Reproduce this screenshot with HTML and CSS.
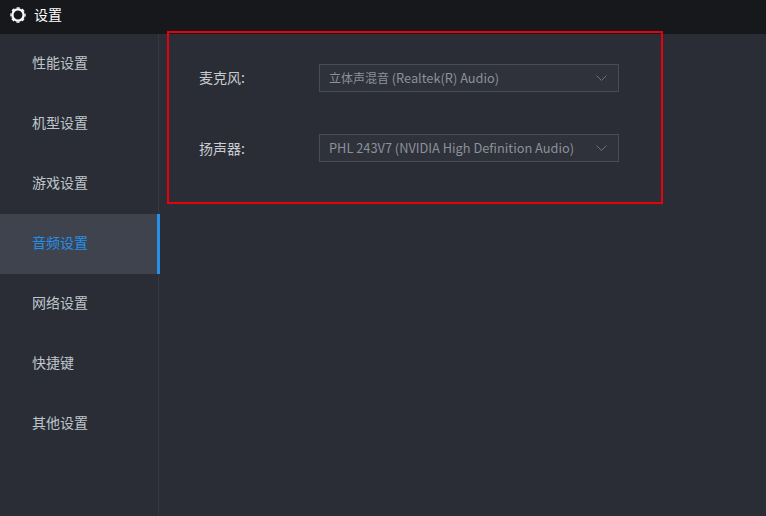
FILE: index.html
```html
<!DOCTYPE html>
<html lang="zh-CN">

<head>
    <meta charset="utf-8">
    <meta name="viewport" content="width=device-width, initial-scale=1.0">
    <title>设置</title>
    <link rel="stylesheet" href="styles.css">
</head>

<body>
    <header class="topbar">
        <svg class="gear" width="16" height="16" viewBox="0 0 16 16">
            <circle cx="8" cy="8" r="5.6" fill="none" stroke="#fff" stroke-width="2.300"></circle>
            <circle cx="8" cy="8" r="7.100" fill="none" stroke="#fff" stroke-width="1.200" stroke-dasharray="3.300 2.270" stroke-dashoffset="1.650"></circle>
        </svg>
        <span class="title">设置</span>
    </header>

    <div class="layout">
        <nav class="sidebar">
            <a class="item">性能设置</a>
            <a class="item">机型设置</a>
            <a class="item">游戏设置</a>
            <a class="item valgt">音频设置</a>
            <a class="item">网络设置</a>
            <a class="item">快捷键</a>
            <a class="item">其他设置</a>
        </nav>

        <main class="content">
            <div class="row">
                <label class="label">麦克风:</label>
                <div class="select">
                    <span>立体声混音 <span class="latin">(Realtek(R) Audio)</span></span>
                    <svg class="arrow" width="11" height="6" viewBox="0 0 11 6">
                        <path d="M.5.5 5.500 5.500 10.500.5" fill="none" stroke="#6c717a"></path>
                    </svg>
                </div>
            </div>
            <div class="row">
                <label class="label">扬声器:</label>
                <div class="select">
                    <span class="latin">PHL 243V7 (NVIDIA High Definition Audio)</span>
                    <svg class="arrow" width="11" height="6" viewBox="0 0 11 6">
                        <path d="M.5.5 5.500 5.500 10.500.5" fill="none" stroke="#6c717a"></path>
                    </svg>
                </div>
            </div>
            <div class="redbox"></div>
        </main>
    </div>
</body>

</html>
```

FILE: styles.css
```css
html,
body {
    height: 100%;
}

body {
    margin: 0;
    overflow: hidden;
    background-color: #2a2d35;
    font-family: "Noto Sans CJK SC", "Noto Sans", sans-serif;
    font-size: 14px;
}

.topbar {
    display: flex;
    align-items: center;
    box-sizing: border-box;
    height: 34px;
    padding-left: 10px;
    padding-bottom: 5px;
    background-color: #16181c;
}

.title {
    margin-left: 8px;
    padding-bottom: 2px;
    color: #fff;
}

.layout {
    display: flex;
    height: 482px;
}

.sidebar {
    width: 158px;
    border-right: 1px solid #35383f;
    flex-shrink: 0;
}

.item {
    display: flex;
    align-items: center;
    box-sizing: border-box;
    height: 60px;
    padding-left: 32px;
    padding-bottom: 4px;
    color: #bfc6cc;
}

.valgt {
    margin-right: -2px;
    background-color: #3f434d;
    color: #2590e8;
    border-right: 3px solid #2590e8;
}

.content {
    position: relative;
    flex: 1;
    padding-top: 30px;
    padding-left: 40px;
}

.row {
    display: flex;
    align-items: center;
    height: 28px;
    margin-bottom: 42px;
}

.label {
    width: 120px;
    padding-bottom: 1px;
    color: #c8ccd0;
}

.row:first-child .label {
    padding-bottom: 3px;
}

.select {
    display: flex;
    align-items: center;
    justify-content: space-between;
    box-sizing: border-box;
    width: 300px;
    height: 28px;
    padding: 0 11px 2px 9px;
    border: 1px solid #484c56;
    background-color: #2f323a;
    color: #8b9199;
    font-size: 12px;
}

.latin {
    font-size: 12.8px;
}

.arrow {
    margin-top: 2px;
}

.redbox {
    position: absolute;
    left: 8px;
    top: -3px;
    width: 492px;
    height: 169px;
    border: 2px solid #e8000a;
}
```
